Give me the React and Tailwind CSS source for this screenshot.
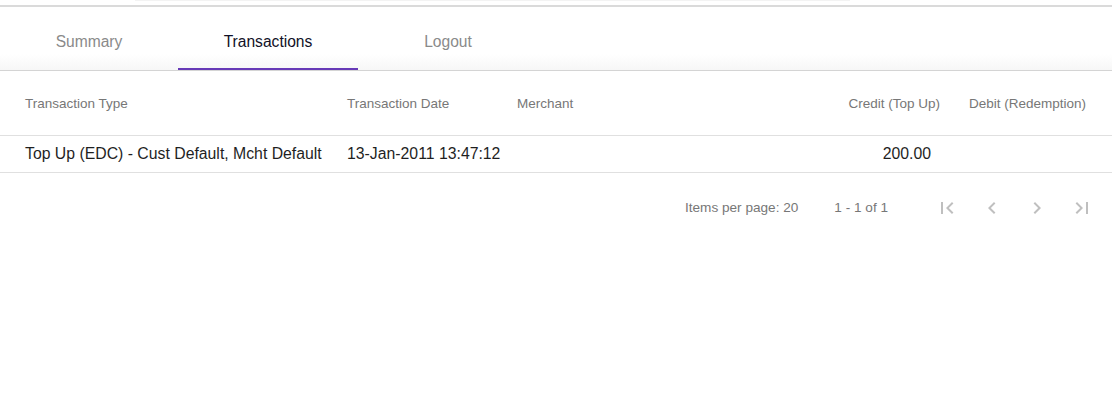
import React from 'react';

const tabs = ['Summary', 'Transactions', 'Logout'];

const rows = [
  {
    type: 'Top Up (EDC) - Cust Default, Mcht Default',
    date: '13-Jan-2011 13:47:12',
    merchant: '',
    credit: '200.00',
    debit: '',
  },
];

const PageIcon = ({ d }) => (
  <button className="w-[45px] h-[40px] flex items-center justify-center text-black/25" disabled>
    <svg viewBox="0 0 24 24" width="24" height="24" fill="currentColor">
      <path d={d} />
    </svg>
  </button>
);

const App = () => {
  const active = 1;

  return (
    <div className="w-[1112px] h-[411px] bg-white font-['Liberation_Sans',Arial,sans-serif] overflow-hidden">
      {/* strip left over from the header above */}
      <div className="h-[5px] flex">
        <div className="ml-[135px] w-[715px] h-[1px] bg-[#f3f3f3]" />
      </div>
      <div className="h-[2px] bg-[#dadada]" />

      {/* tab bar */}
      <div className="flex h-[64px] border-b border-[#d4d4d4] bg-gradient-to-b from-white from-75% to-[#f7f7f7]">
        {tabs.map((t, i) => (
          <div
            key={t}
            className={`relative flex items-center justify-center pt-[6px] text-[15.6px] ${i === 0 ? 'w-[178px]' : 'w-[180px]'} ${
              i === active ? 'text-[#111127]' : 'text-[#8a8a8a]'
            }`}
          >
            {t}
            {i === active && <div className="absolute left-0 right-0 bottom-0 h-[2px] bg-[#673ab7]" />}
          </div>
        ))}
      </div>

      {/* table */}
      <div className="grid grid-cols-[347px_170px_302px_150px_143px] h-[65px] items-center pt-[3px] border-b border-[#e0e0e0] text-[13.5px] text-[#777777]">
        <div className="pl-[25px]">Transaction Type</div>
        <div>Transaction Date</div>
        <div>Merchant</div>
        <div className="text-right pr-[29px] whitespace-nowrap">Credit (Top Up)</div>
        <div className="whitespace-nowrap">Debit (Redemption)</div>
      </div>
      {rows.map((r, i) => (
        <div
          key={i}
          className="grid grid-cols-[347px_170px_302px_150px_143px] h-[37px] items-center border-b border-[#e0e0e0] text-[15.8px] text-[#1f1f1f]"
        >
          <div className="pl-[25px] whitespace-nowrap">{r.type}</div>
          <div className="whitespace-nowrap">{r.date}</div>
          <div>{r.merchant}</div>
          <div className="text-right pr-[38px]">{r.credit}</div>
          <div>{r.debit}</div>
        </div>
      ))}

      {/* paginator */}
      <div className="flex items-center justify-end h-[70px] pr-[8px] text-[13.6px] text-[#777777]">
        <span>Items per page: 20</span>
        <span className="ml-[36px] mr-[36px]">1 - 1 of 1</span>
        <div className="flex">
          <PageIcon d="M18.41 16.59L13.82 12l4.59-4.59L17 6l-6 6 6 6zM6 6h2v12H6z" />
          <PageIcon d="M15.41 7.41L14 6l-6 6 6 6 1.41-1.41L10.83 12z" />
          <PageIcon d="M10 6L8.59 7.41 13.17 12l-4.58 4.59L10 18l6-6z" />
          <PageIcon d="M5.59 7.41L10.18 12l-4.59 4.59L7 18l6-6-6-6zM16 6h2v12h-2z" />
        </div>
      </div>
    </div>
  );
};

export default App;
